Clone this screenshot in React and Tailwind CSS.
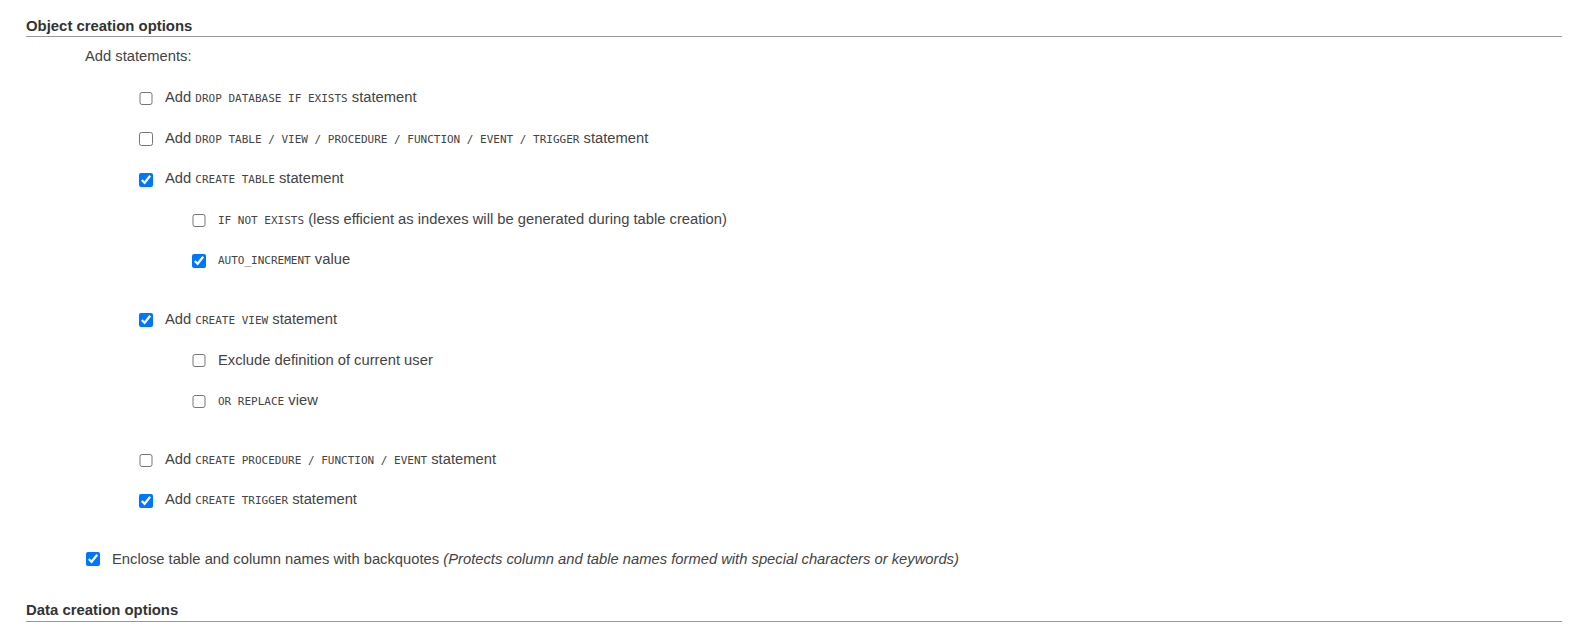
import React from "react";

const M = ({ children }) => (
  <span className="font-['DejaVu_Sans_Mono',monospace] text-[11px]">{children}</span>
);

function Row({ level, checked, children, gapAfter }) {
  const ml = level === 0 ? "ml-[60px]" : level === 1 ? "ml-[113px]" : "ml-[166px]";
  return (
    <label className={`flex items-center h-[40.6px] ${ml} ${gapAfter || ""}`}>
      <input type="checkbox" defaultChecked={checked} className="w-[13.5px] h-[13.5px] mt-[1px] shrink-0" />
      <span className="ml-[12.5px] leading-[18px] whitespace-nowrap">{children}</span>
    </label>
  );
}

export default function App() {
  return (
    <div className="bg-white min-h-[630px] pl-[26px] pr-[19px] text-[#444] text-[14.75px] font-['Liberation_Sans',Arial,sans-serif]">
      <div className="pt-[16.5px]">
        <h3 className="text-[14.9px] font-bold leading-[18px] text-[#333] pb-[1.5px] border-b border-[#999]">
          Object creation options
        </h3>
      </div>
      <div className="mt-[10px] ml-[59px] leading-[18px]">Add statements:</div>
      <div className="mt-[12.8px]">
        <Row level={1}>
          Add <M>DROP DATABASE IF EXISTS</M> statement
        </Row>
        <Row level={1}>
          Add <M>DROP TABLE / VIEW / PROCEDURE / FUNCTION / EVENT / TRIGGER</M> statement
        </Row>
        <Row level={1} checked>
          Add <M>CREATE TABLE</M> statement
        </Row>
        <Row level={2}>
          <M>IF NOT EXISTS</M> (less efficient as indexes will be generated during table creation)
        </Row>
        <Row level={2} checked gapAfter="mb-[18.5px]">
          <M>AUTO_INCREMENT</M> value
        </Row>
        <Row level={1} checked>
          Add <M>CREATE VIEW</M> statement
        </Row>
        <Row level={2}>Exclude definition of current user</Row>
        <Row level={2} gapAfter="mb-[18.5px]">
          <M>OR REPLACE</M> view
        </Row>
        <Row level={1}>
          Add <M>CREATE PROCEDURE / FUNCTION / EVENT</M> statement
        </Row>
        <Row level={1} checked gapAfter="mb-[17.5px]">
          Add <M>CREATE TRIGGER</M> statement
        </Row>
        <Row level={0} checked>
          Enclose table and column names with backquotes{" "}
          <i>(Protects column and table names formed with special characters or keywords)</i>
        </Row>
      </div>
      <div className="mt-[21.7px]">
        <h3 className="text-[14.9px] font-bold leading-[18px] text-[#333] pb-[2.5px] border-b border-[#999]">
          Data creation options
        </h3>
      </div>
    </div>
  );
}
